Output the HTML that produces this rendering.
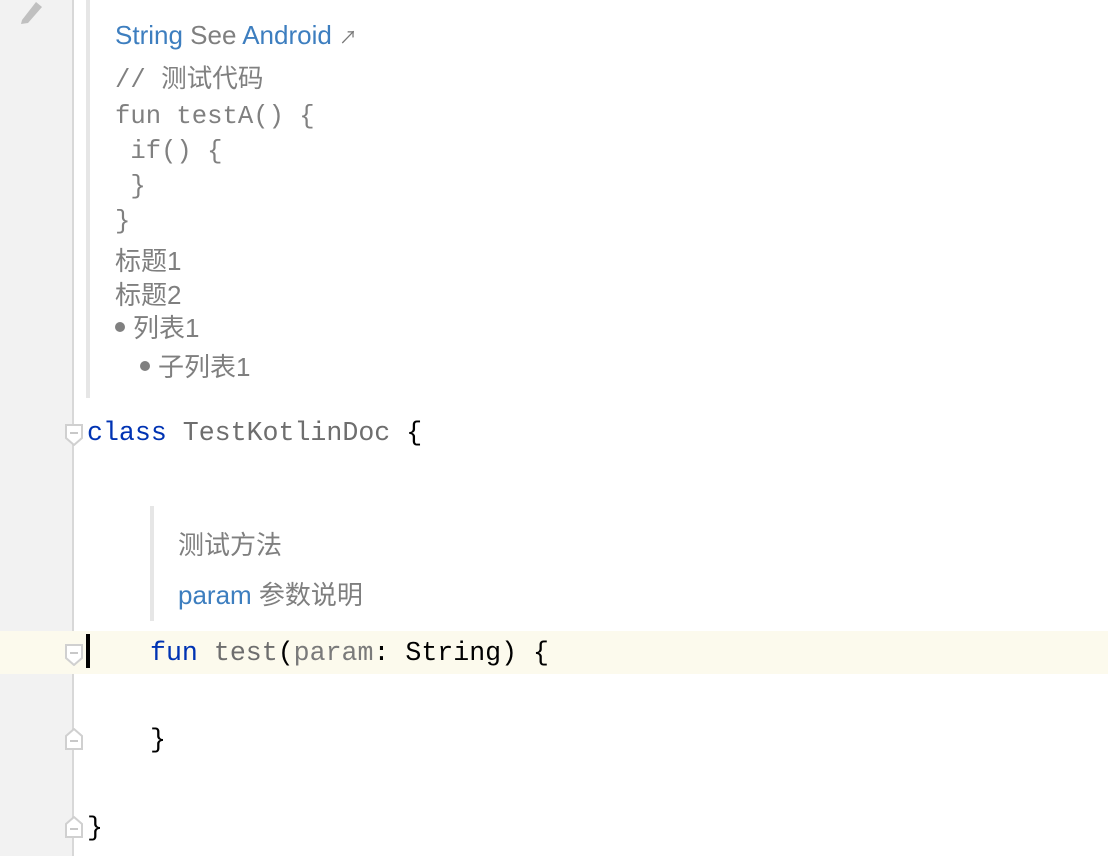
<!DOCTYPE html>
<html><head><meta charset="utf-8"><style>
body{margin:0;width:1108px;height:856px;background:#fff;position:relative;overflow:hidden;font-family:"Liberation Sans","Noto Sans CJK SC",sans-serif}
.gut{position:absolute;left:0;top:0;width:73px;height:856px;background:#f2f2f2}
.gl{position:absolute;left:72px;top:0;width:2px;height:856px;background:#d8d8d8}
.t{position:absolute;white-space:pre;line-height:1}
.m{font-family:"Liberation Mono","Noto Sans CJK SC",monospace;font-size:26.6px}
.dm{font-family:"Liberation Mono","Noto Sans CJK SC",monospace;font-size:25.6px;color:#808080}
.ds{font-size:26px;color:#7f7f7f}
.b{color:#3d7ebf}
.kw{color:#0033b3}
.g{color:#6e6e6e}
.fold{position:absolute;left:65px;width:18px;height:22px}
.dot{display:inline-block;width:10px;height:10px;border-radius:50%;background:#808080;vertical-align:middle;margin-right:8px;position:relative;top:-3px}
</style></head><body>
<div class="gut"></div><div class="gl"></div>
<div style="position:absolute;left:0;top:631px;width:1108px;height:43px;background:#fcfaed"></div>
<div style="position:absolute;left:86px;top:0;width:4px;height:398px;background:#e6e6e6"></div>
<div style="position:absolute;left:150px;top:506px;width:4px;height:115px;background:#e6e6e6"></div>
<svg style="position:absolute;left:18px;top:0" width="28" height="26" viewBox="0 0 28 26"><path d="M4 20 L18 2 L24 7 L10 23 L3 24 Z" fill="#c0c0c0"/></svg>

<div class="t ds" style="left:115px;top:22px"><span class="b">String</span> See <span class="b">Android</span> <span style="font-size:18px;color:#777">↗</span></div>
<div class="t dm" style="left:115px;top:68px">// 测试代码</div>
<div class="t dm" style="left:115px;top:104px">fun testA() {</div>
<div class="t dm" style="left:115px;top:139px"> if() {</div>
<div class="t dm" style="left:115px;top:174px"> }</div>
<div class="t dm" style="left:115px;top:209px">}</div>
<div class="t ds" style="left:115px;top:248px">标题1</div>
<div class="t ds" style="left:115px;top:282px">标题2</div>
<div class="t ds" style="left:115px;top:315px"><span class="dot"></span>列表1</div>
<div class="t ds" style="left:140px;top:354px"><span class="dot"></span>子列表1</div>

<div class="t m" style="left:87px;top:420px"><span class="kw">class</span> <span class="g">TestKotlinDoc</span> {</div>
<div class="t ds" style="left:178px;top:532px">测试方法</div>
<div class="t ds" style="left:178px;top:582px"><span class="b">param</span> 参数说明</div>
<div style="position:absolute;left:86px;top:634px;width:4px;height:34px;background:#000"></div>
<div class="t m" style="left:150px;top:640px"><span class="kw">fun</span> <span class="g">test</span>(<span style="color:#7a7a7a">param</span>: String) {</div>
<div class="t m" style="left:150px;top:727px">}</div>
<div class="t m" style="left:87px;top:815px">}</div>

<svg class="fold" style="top:424px" viewBox="0 0 18 22"><path d="M1 1 H17 V14 L9 21 L1 14 Z" fill="#fff" stroke="#d0d0d0" stroke-width="2"/><path d="M5 9 H13" stroke="#c8c8c8" stroke-width="2"/></svg>
<svg class="fold" style="top:644px" viewBox="0 0 18 22"><path d="M1 1 H17 V14 L9 21 L1 14 Z" fill="#fff" stroke="#d0d0d0" stroke-width="2"/><path d="M5 9 H13" stroke="#c8c8c8" stroke-width="2"/></svg>
<svg class="fold" style="top:728px" viewBox="0 0 18 22"><path d="M1 21 H17 V8 L9 1 L1 8 Z" fill="#fff" stroke="#d0d0d0" stroke-width="2"/><path d="M5 13 H13" stroke="#c8c8c8" stroke-width="2"/></svg>
<svg class="fold" style="top:816px" viewBox="0 0 18 22"><path d="M1 21 H17 V8 L9 1 L1 8 Z" fill="#fff" stroke="#d0d0d0" stroke-width="2"/><path d="M5 13 H13" stroke="#c8c8c8" stroke-width="2"/></svg>
</body></html>
